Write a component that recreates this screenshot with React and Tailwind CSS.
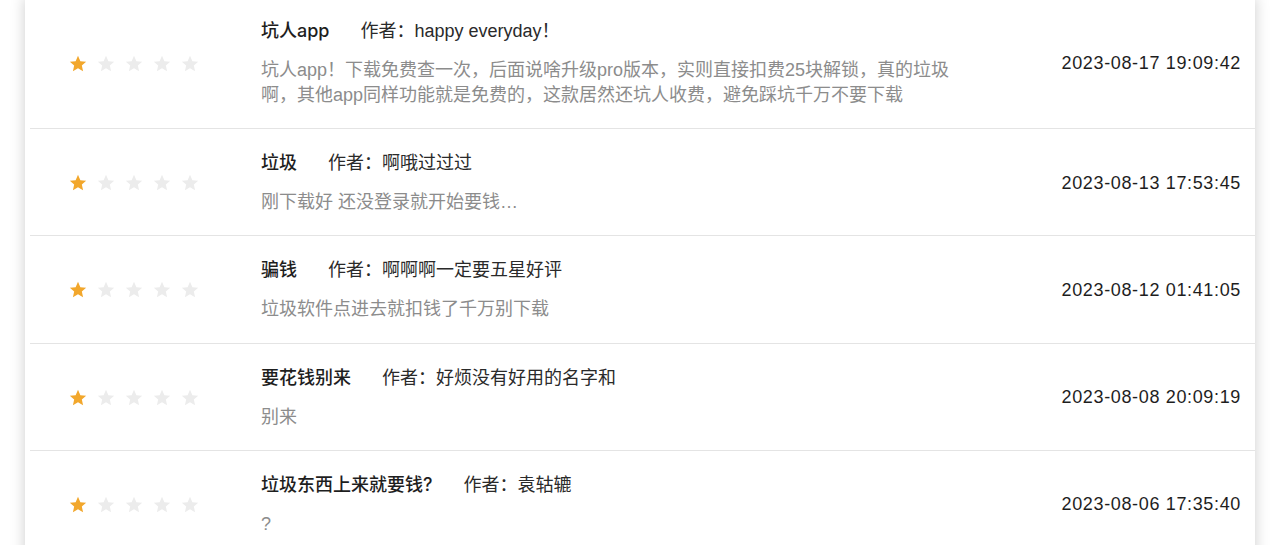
import React from "react";

const reviews = [
  {
    title: "坑人app",
    author: "happy everyday！",
    body: "坑人app！下载免费查一次，后面说啥升级pro版本，实则直接扣费25块解锁，真的垃圾啊，其他app同样功能就是免费的，这款居然还坑人收费，避免踩坑千万不要下载",
    date: "2023-08-17 19:09:42",
  },
  { title: "垃圾", author: "啊哦过过过", body: "刚下载好 还没登录就开始要钱…", date: "2023-08-13 17:53:45" },
  { title: "骗钱", author: "啊啊啊一定要五星好评", body: "垃圾软件点进去就扣钱了千万别下载", date: "2023-08-12 01:41:05" },
  { title: "要花钱别来", author: "好烦没有好用的名字和", body: "别来", date: "2023-08-08 20:09:19" },
  { title: "垃圾东西上来就要钱?", author: "袁轱辘", body: "?", date: "2023-08-06 17:35:40" },
];

function Star({ on }) {
  return (
    <svg width="20" height="20" viewBox="0 0 24 24" className="shrink-0">
      <path
        d="M12 2.2l2.85 6.35 6.95.7-5.2 4.65 1.5 6.85L12 17.2l-6.1 3.55 1.5-6.85-5.2-4.65 6.95-.7z"
        fill={on ? "#f2a72c" : "#ececec"}
      />
    </svg>
  );
}

function Row({ r, first }) {
  return (
    <div
      className={
        "flex items-center border-b border-[#e4e4e4] ml-[5px] pt-[22px] " +
        (first ? "pb-[20px]" : "pb-[20.3px]")
      }
    >
      <div className="w-[231px] shrink-0 flex items-center gap-[8px] pl-[38px]">
        <Star on />
        <Star />
        <Star />
        <Star />
        <Star />
      </div>
      <div className="flex-1 min-w-0">
        <div className="flex items-center h-[24px] text-[18px] leading-[24px]">
          <span className="font-medium text-[#1e1e1e] font-['Inter','Noto_Sans_CJK_SC',sans-serif]">{r.title}</span>
          <span className="ml-[31px] text-[#2a2a2a]">作者：{r.author}</span>
        </div>
        <div className="mt-[15px] w-[698px] text-[18px] leading-[25px] text-[#8c8c8c]">{r.body}</div>
      </div>
      <div className="shrink-0 pr-[14px] text-[18px] tracking-[0.65px] text-[#1e1e1e]">{r.date}</div>
    </div>
  );
}

export default function App() {
  return (
    <div
      className="w-[1280px] h-[545px] overflow-hidden bg-white"
      style={{ fontFamily: '"Liberation Sans", "Noto Sans CJK SC", sans-serif' }}
    >
      <div className="mx-[25px] -mt-[3px] bg-white shadow-[0_0_14px_rgba(0,0,0,0.2)] min-h-[560px]">
        {reviews.map((r, i) => (
          <Row key={i} r={r} first={i === 0} />
        ))}
      </div>
    </div>
  );
}
